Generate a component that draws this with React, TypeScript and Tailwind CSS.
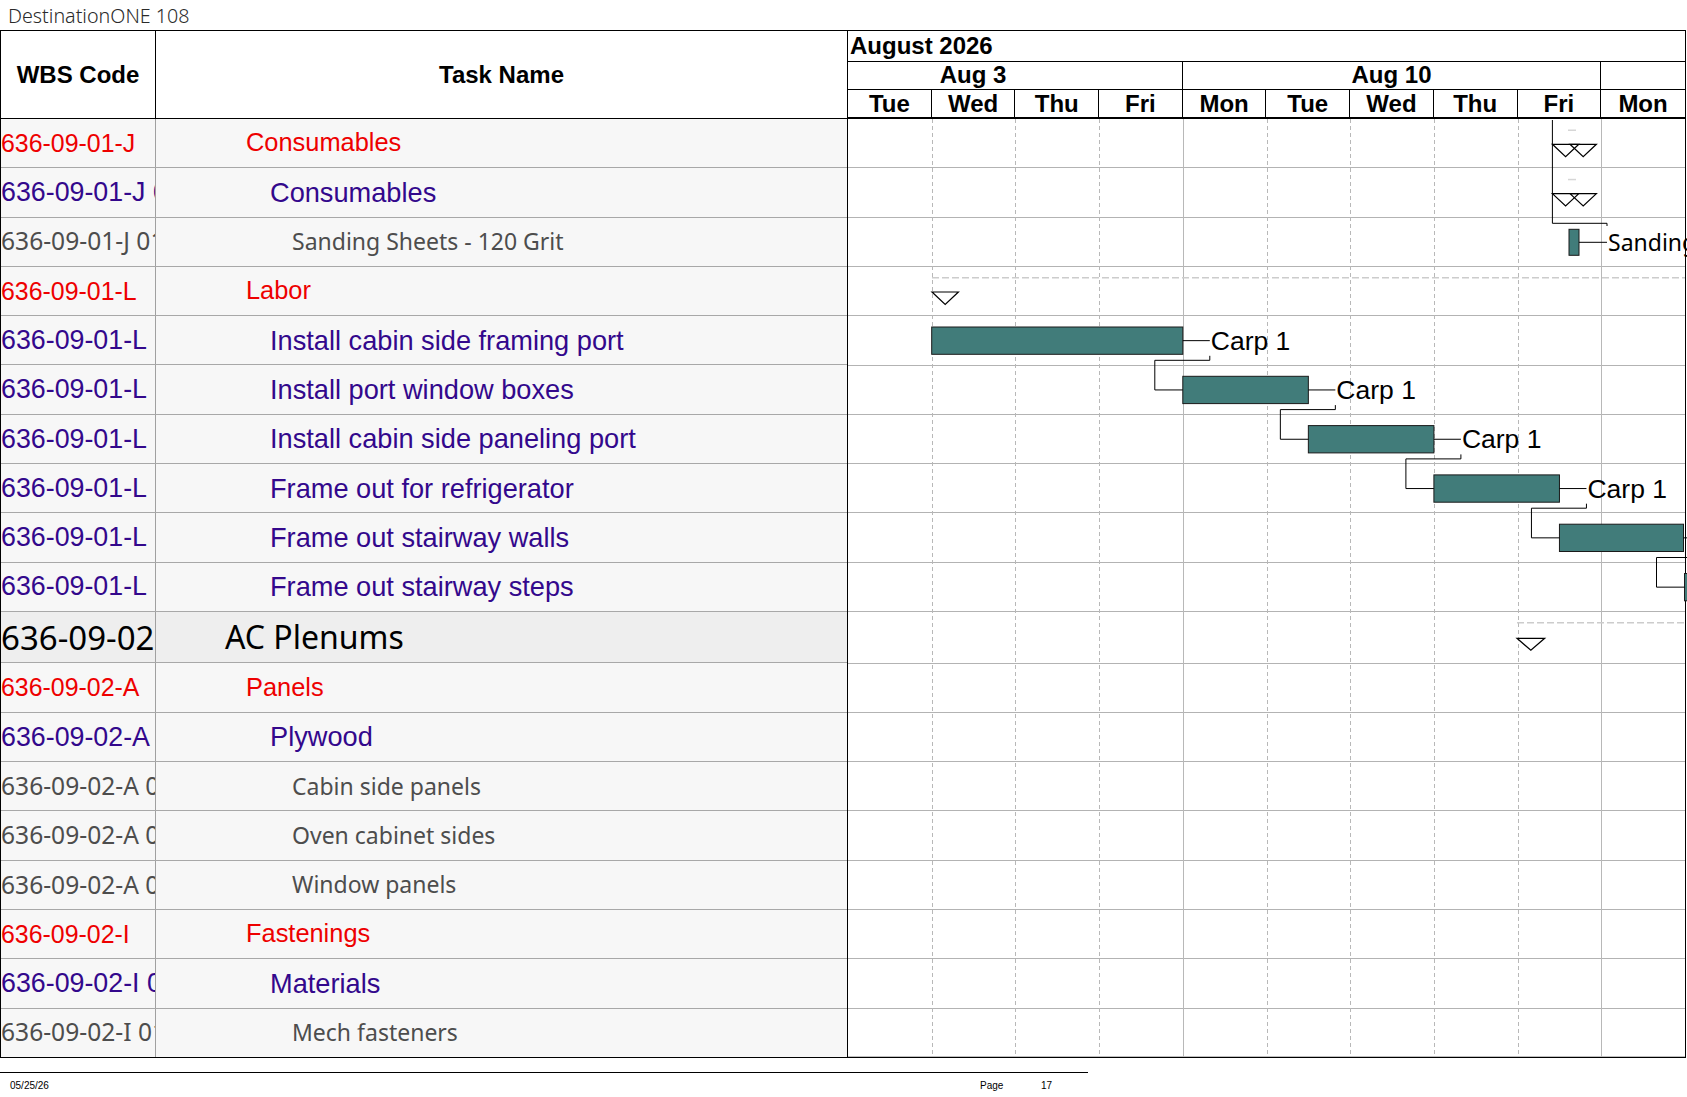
import React from "react"

type Level = 0 | 1 | 2 | 3

interface Row {
  wbs: string
  name: string
  level: Level
}

const ROWS: Row[] = [
  { wbs: "636-09-01-J", name: "Consumables", level: 1 },
  { wbs: "636-09-01-J 01", name: "Consumables", level: 2 },
  { wbs: "636-09-01-J 01-01", name: "Sanding Sheets - 120 Grit", level: 3 },
  { wbs: "636-09-01-L", name: "Labor", level: 1 },
  { wbs: "636-09-01-L", name: "Install cabin side framing port", level: 2 },
  { wbs: "636-09-01-L", name: "Install port window boxes", level: 2 },
  { wbs: "636-09-01-L", name: "Install cabin side paneling port", level: 2 },
  { wbs: "636-09-01-L", name: "Frame out for refrigerator", level: 2 },
  { wbs: "636-09-01-L", name: "Frame out stairway walls", level: 2 },
  { wbs: "636-09-01-L", name: "Frame out stairway steps", level: 2 },
  { wbs: "636-09-02", name: "AC Plenums", level: 0 },
  { wbs: "636-09-02-A", name: "Panels", level: 1 },
  { wbs: "636-09-02-A", name: "Plywood", level: 2 },
  { wbs: "636-09-02-A 01", name: "Cabin side panels", level: 3 },
  { wbs: "636-09-02-A 02", name: "Oven cabinet sides", level: 3 },
  { wbs: "636-09-02-A 03", name: "Window panels", level: 3 },
  { wbs: "636-09-02-I", name: "Fastenings", level: 1 },
  { wbs: "636-09-02-I 01", name: "Materials", level: 2 },
  { wbs: "636-09-02-I 01-01", name: "Mech fasteners", level: 3 },
]

const WBS_CLASS: Record<Level, string> = {
  0: "font-['Noto_Sans',sans-serif] text-[33px] text-black",
  1: "font-['Liberation_Sans',Arial,sans-serif] text-[24.9px] text-[#ee0000]",
  2: "font-['Liberation_Sans',Arial,sans-serif] text-[26.8px] text-[#33088c]",
  3: "font-['Noto_Sans',sans-serif] text-[24.6px] text-[#4d4d4d]",
}

const NAME_CLASS: Record<Level, string> = {
  0: "pl-[69px] font-['Noto_Sans',sans-serif] text-[32px] text-black",
  1: "pl-[90px] font-['Liberation_Sans',Arial,sans-serif] text-[25.4px] text-[#ee0000]",
  2: "pl-[114px] font-['Liberation_Sans',Arial,sans-serif] text-[27.2px] text-[#33088c]",
  3: "pl-[136px] font-['Noto_Sans',sans-serif] text-[23px] text-[#4d4d4d]",
}

const DAYS = ["Tue", "Wed", "Thu", "Fri", "Mon", "Tue", "Wed", "Thu", "Fri", "Mon"]
const DAY = 83.7

const rowTops: number[] = []
const rowHeights: number[] = []
let acc = 0
ROWS.forEach((r) => {
  const h = r.level === 0 ? 51.5 : 49.3
  rowTops.push(acc)
  rowHeights.push(h)
  acc += h
})
const BODY_H = acc

const BAR_OFF = 10.8
const BAR_H = 27.3

const BARS = [
  { row: 4, x1: DAY, x2: DAY * 4, label: "Carp 1" },
  { row: 5, x1: DAY * 4, x2: DAY * 5.5, label: "Carp 1" },
  { row: 6, x1: DAY * 5.5, x2: DAY * 7, label: "Carp 1" },
  { row: 7, x1: DAY * 7, x2: DAY * 8.5, label: "Carp 1" },
  { row: 8, x1: DAY * 8.5, x2: DAY * 10 - 1.5, label: "" },
  { row: 9, x1: DAY * 10 - 0.5, x2: DAY * 11, label: "" },
]

function tri(x: number, y: number, w = 26.4, h = 12.4) {
  return `${x},${y} ${x + w},${y} ${x + w / 2},${y + h}`
}

function GanttBody() {
  const barTop = (r: number) => rowTops[r] + BAR_OFF
  const barMid = (r: number) => rowTops[r] + BAR_OFF + BAR_H / 2
  const barBottom = (r: number) => rowTops[r] + BAR_OFF + BAR_H

  return (
    <svg width={839} height={BODY_H} className="block">
      {/* row lines */}
      {rowTops.map((t, i) => {
        const y = Math.round(t + rowHeights[i]) - 0.5
        const last = i === ROWS.length - 1
        return (
          <line key={i} x1={0} x2={838} y1={y} y2={y} stroke={last ? "#000" : "#b3b3b3"} strokeWidth={last ? 1.5 : 1} />
        )
      })}

      {/* day grid */}
      {Array.from({ length: 9 }, (_, k) => k + 1).map((k) => {
        const x = Math.round(DAY * k) + 0.5
        const week = k === 4 || k === 9
        return (
          <line
            key={k}
            x1={x}
            x2={x}
            y1={0}
            y2={BODY_H - 1}
            stroke="#b8b8b8"
            strokeWidth={1}
            strokeDasharray={week ? undefined : "4 3"}
          />
        )
      })}
      <line x1={837.5} x2={837.5} y1={0} y2={BODY_H} stroke="#000" strokeWidth={1} />

      {/* consumables summaries */}
      <polyline
        points={`704.4,1 704.4,104.3 759,104.3 759,107`}
        fill="none"
        stroke="#000"
        strokeWidth={1}
      />
      {[0, 1].map((r) => (
        <g key={r}>
          <rect x={720} y={rowTops[r] + 10.5} width={8} height={1.5} fill="#d6d6d6" />
          <polygon points={tri(704.4, rowTops[r] + 25.3)} fill="none" stroke="#000" strokeWidth={1.2} />
          <polygon points={tri(722, rowTops[r] + 25.3)} fill="none" stroke="#000" strokeWidth={1.2} />
        </g>
      ))}

      {/* sanding sheet */}
      <rect x={721} y={rowTops[2] + 11.7} width={10} height={26} fill="#417c7a" stroke="#1a1a1a" strokeWidth={1} />
      <line x1={731} x2={759} y1={rowTops[2] + 24.7} y2={rowTops[2] + 24.7} stroke="#000" strokeWidth={1} />
      <text x={760} y={rowTops[2] + 33} fontFamily="Noto Sans, sans-serif" fontSize={23} fill="#000">
        Sanding Sheets
      </text>

      {/* labor summary */}
      <line
        x1={84}
        x2={837}
        y1={rowTops[3] + 10.8}
        y2={rowTops[3] + 10.8}
        stroke="#cccccc"
        strokeWidth={1.5}
        strokeDasharray="7 3"
      />
      <polygon points={tri(84, rowTops[3] + 25.1)} fill="#fff" stroke="#000" strokeWidth={1.2} />

      {/* task bars */}
      {BARS.map((b, i) => (
        <g key={i}>
          <rect
            x={b.x1}
            y={barTop(b.row)}
            width={b.x2 - b.x1}
            height={BAR_H}
            fill="#417c7a"
            stroke="#1a1a1a"
            strokeWidth={1}
          />
          <line x1={b.x2} x2={b.x2 + 27} y1={barMid(b.row)} y2={barMid(b.row)} stroke="#000" strokeWidth={1} />
          {b.label && (
            <text
              x={b.x2 + 28}
              y={barMid(b.row) + 9.2}
              fontFamily="Liberation Sans, Arial, sans-serif"
              fontSize={26.5}
              fill="#000"
            >
              {b.label}
            </text>
          )}
        </g>
      ))}

      {/* links */}
      {BARS.slice(0, -1).map((a, i) => {
        const b = BARS[i + 1]
        const xa = a.x2 + 27
        const yb = barBottom(a.row)
        const xb = b.x1 - 28
        const pts = `${xa},${yb + 1.5} ${xa},${yb + 6} ${xb},${yb + 6} ${xb},${barMid(b.row)} ${b.x1},${barMid(b.row)}`
        return <polyline key={i} points={pts} fill="none" stroke="#000" strokeWidth={1} />
      })}

      {/* AC plenums summary */}
      <line
        x1={669}
        x2={837}
        y1={rowTops[10] + 10.7}
        y2={rowTops[10] + 10.7}
        stroke="#cccccc"
        strokeWidth={1.5}
        strokeDasharray="7 3"
      />
      <polygon points={tri(669, rowTops[10] + 26.3, 27.7, 12)} fill="#fff" stroke="#000" strokeWidth={1.2} />
    </svg>
  )
}

export default function App() {
  const head = "font-['Liberation_Sans',Arial,sans-serif] font-bold text-[24px] leading-none text-black"

  return (
    <div className="w-[1687px] h-[1097px] overflow-hidden bg-white text-black">
      {/* title */}
      <div className="h-[30px] flex items-center pl-[8px] pt-[1px] font-['Noto_Sans',sans-serif] font-light text-[19.7px] leading-none text-[#2a2a2a]">
        DestinationONE 108
      </div>

      <div className="flex w-[1686px] border-t border-black">
        {/* task table */}
        <div className="w-[848px] shrink-0 border-l border-r border-black">
          <div className={`flex h-[88px] border-b border-black ${head}`}>
            <div className="w-[155px] shrink-0 border-r border-black flex items-center justify-center">WBS Code</div>
            <div className="flex-1 flex items-center justify-center">Task Name</div>
          </div>
          {ROWS.map((r, i) => {
            const last = i === ROWS.length - 1
            return (
              <div
                key={i}
                className={`flex border-b ${last ? "border-black" : "border-[#a8a8a8]"} ${
                  r.level === 0 ? "h-[51.5px] bg-[#eeeeee]" : "h-[49.3px] bg-[#f7f7f7]"
                }`}
              >
                <div
                  className={`w-[155px] shrink-0 border-r border-[#a0a0a0] overflow-hidden whitespace-nowrap flex items-center leading-none ${WBS_CLASS[r.level]}`}
                >
                  {r.wbs}
                </div>
                <div className={`flex-1 flex items-center whitespace-nowrap overflow-hidden leading-none ${NAME_CLASS[r.level]}`}>
                  {r.name}
                </div>
              </div>
            )
          })}
        </div>

        {/* gantt */}
        <div className="w-[838px] shrink-0">
          <div className={`border-r border-b-2 border-black ${head}`}>
            <div className="h-[30.5px] border-b border-black flex items-center pl-[2px]">August 2026</div>
            <div className="h-[28.5px] border-b border-black flex">
              <div className="w-[334.8px] shrink-0 pr-[83.7px] border-r border-black flex items-center justify-center">
                Aug 3
              </div>
              <div className="w-[418.5px] shrink-0 border-r border-black flex items-center justify-center">Aug 10</div>
              <div className="flex-1" />
            </div>
            <div className="h-[27px] flex">
              {DAYS.map((d, i) => (
                <div
                  key={i}
                  className={`w-[83.7px] shrink-0 flex items-center justify-center ${i < 9 ? "border-r border-black" : ""}`}
                >
                  {d}
                </div>
              ))}
            </div>
          </div>
          <GanttBody />
        </div>
      </div>

      {/* footer */}
      <div className="mt-[14px] w-[1088px] border-t border-black">
        <div className="flex pt-[8px] font-['Liberation_Sans',Arial,sans-serif] text-[10px] leading-[10px] text-black">
          <span className="w-[980px] pl-[10px]">05/25/26</span>
          <span className="w-[61px]">Page</span>
          <span>17</span>
        </div>
      </div>
    </div>
  )
}
